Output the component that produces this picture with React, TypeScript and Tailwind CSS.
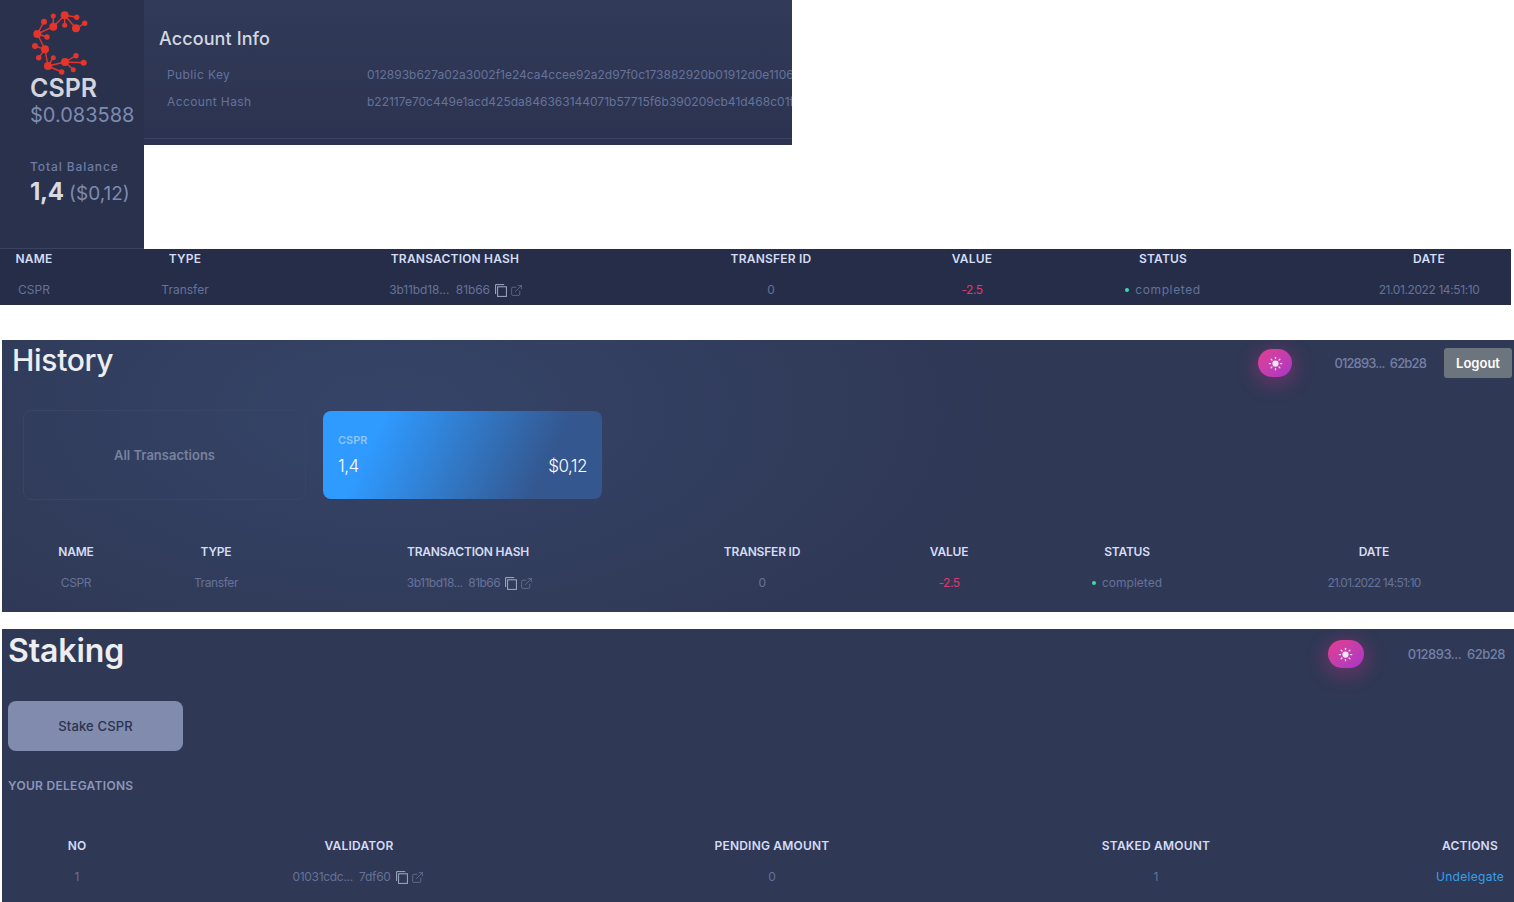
import React from 'react';
import { ExternalLink, Sun } from 'lucide-react';

const nodes = [
  [64.7, 14.3, 4], [53.3, 25.7, 4], [44, 20.7, 3], [53.3, 15, 2.5], [76.7, 16.3, 2.7], [84.7, 22.3, 2.7], [76, 27.3, 4],
  [64.7, 24.3, 2.5], [37.3, 33, 4], [47, 36, 2.7], [35, 45, 3], [45, 48.3, 4], [38.7, 56.7, 2.7], [53.3, 56.7, 2.5],
  [48, 65, 4], [65, 61, 4], [76, 54.7, 2.7], [83.7, 61.7, 3], [73.3, 68.7, 2.5], [61.7, 71, 2.7],
];

const links = [
  [64.7, 14.3, 53.3, 25.7], [53.3, 25.7, 53.3, 15], [53.3, 25.7, 37.3, 33], [44, 20.7, 37.3, 33], [64.7, 14.3, 76.7, 16.3],
  [64.7, 14.3, 76, 27.3], [76, 27.3, 84.7, 22.3], [64.7, 14.3, 64.7, 24.3], [37.3, 33, 47, 36], [37.3, 33, 45, 48.3],
  [35, 45, 45, 48.3], [45, 48.3, 38.7, 56.7], [45, 48.3, 48, 65], [53.3, 56.7, 48, 65], [48, 65, 65, 61], [65, 61, 76, 54.7],
  [65, 61, 83.7, 61.7], [65, 61, 73.3, 68.7], [48, 65, 61.7, 71],
];

const Logo = () => (
  <svg width="60" height="66" viewBox="30 9 60 66" className="block">
    {links.map((l, i) => (
      <line key={i} x1={l[0]} y1={l[1]} x2={l[2]} y2={l[3]} stroke="#e5352b" strokeWidth="1.4" />
    ))}
    {nodes.map((n, i) => (
      <circle key={i} cx={n[0]} cy={n[1]} r={n[2]} fill="#e5352b" />
    ))}
  </svg>
);

const CopyIcon = () => (
  <svg width="12" height="13" viewBox="0 0 12 13" fill="none" stroke="#a3abc4" strokeWidth="1" className="shrink-0">
    <path d="M.6 10V.6h8.6" />
    <rect x="2.6" y="2.8" width="8.8" height="9.6" />
  </svg>
);

const HashCell = ({ left, right, textCls, boxCls }: { left: string; right: string; textCls: string; boxCls: string }) => (
  <div className={"flex items-center justify-center gap-[5px] whitespace-pre " + boxCls}>
    <span className={textCls}>{left}&nbsp;&nbsp;{right}</span>
    <CopyIcon />
    <ExternalLink className="w-[13px] h-[13px] -ml-[2px] text-[#7f89a8]" strokeWidth={1.1} />
  </div>
);

const Completed = ({ textCls }: { textCls: string }) => (
  <div className="flex items-center justify-center gap-[6px]">
    <span className="w-1 h-1 rounded-full bg-[#3fd8b4]"></span>
    <span className={textCls}>completed</span>
  </div>
);

const ThemeToggle = ({ wide }: { wide?: boolean }) => (
  <div className={(wide ? "w-[36px]" : "w-[34px]") + " h-7 rounded-[14px] bg-gradient-to-br from-[#e43c8e] to-[#a834c8] shadow-[0_4px_18px_5px_rgba(214,52,140,0.28)] flex items-center justify-center"}>
    <Sun className="w-[15px] h-[15px] text-[#f1e6f2] fill-[#f1e6f2]" strokeWidth={2} />
  </div>
);

// tracking differs per table, the reference is squeezed in places
const headCls = "text-center text-[12px] font-semibold text-[#d5dcf5] whitespace-nowrap tracking-[0.2px]";
const headTightCls = "text-center text-[12px] font-semibold text-[#d5dcf5] whitespace-nowrap tracking-[-0.2px]";
const cellBase = "text-center text-[12px] whitespace-nowrap";
const cellCls = cellBase + " text-[#66729a]";
const tightCls = cellBase + " text-[#66729a] tracking-[-0.4px]";

const App: React.FC = () => {
  return (
    <div className="bg-white h-[902px] w-[1514px] overflow-hidden font-['Inter',sans-serif]">
      {/* Account block */}
      <div className="flex items-start h-[249px]">
        <aside className="w-[144px] h-[249px] bg-[#29314d] border-b border-[#3a4361] pl-[30px] pt-[10px] flex flex-col">
          <Logo />
          <div className="text-[25px] leading-[26px] font-semibold text-[#d2d5de] -mt-[1px]">CSPR</div>
          <div className="text-[20px] leading-[26px] text-[#7e8bb0] whitespace-nowrap mt-[1px]">$0.083588</div>
          <div className="text-[12px] leading-4 font-medium text-[#6f7ca6] mt-[31px] tracking-[0.9px] whitespace-nowrap">Total Balance</div>
          <div className="mt-[3px] leading-7 whitespace-nowrap text-[#7e8bb0] text-[19px]">
            <span className="text-[24px] font-bold text-[#d8dae2] tracking-[-0.3px]">1,4</span> ($0,12)
          </div>
        </aside>
        <section className="w-[648px] h-[145px] overflow-hidden bg-gradient-to-b from-[#313a58] to-[#2b3350] pt-[27px]">
          <h2 className="text-[18px] leading-6 font-medium text-[#d4d7e0] pl-[15px] tracking-[0.1px]">Account Info</h2>
          <dl className="pl-[23px] mt-[10px] text-[12px] text-[#66729a] border-b border-[#3a4361] h-[78px]">
            <div className="flex h-[27px] items-center whitespace-nowrap">
              <dt className="w-[200px] shrink-0 tracking-[0.4px]">Public Key</dt>
              <dd>012893b627a02a3002f1e24ca4ccee92a2d97f0c173882920b01912d0e1106a8c21</dd>
            </div>
            <div className="flex h-[27px] items-center whitespace-nowrap">
              <dt className="w-[200px] shrink-0 tracking-[0.4px]">Account Hash</dt>
              <dd>b22117e70c449e1acd425da846363144071b57715f6b390209cb41d468c01f7a6e2</dd>
            </div>
          </dl>
        </section>
      </div>

      {/* Top transactions table */}
      <div className="w-[1511px] h-[56px] bg-[#252d48]">
        <div className="grid grid-cols-[68px_234px_306px_326px_76px_306px_195px] h-[20px] items-center">
          <div className={headCls}>NAME</div>
          <div className={headCls}>TYPE</div>
          <div className={headCls}>TRANSACTION HASH</div>
          <div className={headCls}>TRANSFER ID</div>
          <div className={headCls}>VALUE</div>
          <div className={headCls}>STATUS</div>
          <div className={headCls + " pl-[31px]"}>DATE</div>
        </div>
        <div className="grid grid-cols-[68px_234px_306px_326px_76px_306px_195px] h-[36px] pt-[6px] items-center">
          <div className={cellCls}>CSPR</div>
          <div className={cellCls}>Transfer</div>
          <div className={cellCls}><HashCell left="3b11bd18..." right="81b66" textCls="tracking-[-0.1px]" boxCls="pl-[2px]" /></div>
          <div className={cellCls}>0</div>
          <div className={cellBase + " text-[#e0386f] tracking-[-0.5px]"}>-2.5</div>
          <div className={cellCls}><Completed textCls="tracking-[0.6px]" /></div>
          <div className={cellCls + " pl-[31px] tracking-[-0.4px]"}>21.01.2022 14:51:10</div>
        </div>
      </div>

      {/* History */}
      <section className="ml-[2px] mt-[35px] w-[1512px] h-[272px] overflow-hidden bg-[radial-gradient(ellipse_620px_300px_at_390px_70px,#354468,#2f3855)]">
        <header className="flex items-start justify-between h-[71px]">
          <h1 className="text-[30px] leading-10 font-medium text-[#eceef2] pl-[10px] tracking-[-0.3px]">History</h1>
          <div className="flex items-center pt-[8px] pr-[2px]">
            <ThemeToggle />
            <span className="text-[13px] font-medium text-[#7480a6] ml-[42px] mt-[1px] whitespace-pre tracking-[-0.85px]">012893...&nbsp;&nbsp;62b28</span>
            <button className="ml-[18px] w-[68px] h-[30px] rounded-[3px] bg-[#6c757d] text-white text-[13px] font-semibold pt-[1px]">Logout</button>
          </div>
        </header>
        <div className="flex gap-[17px] pl-[21px]">
          <div className="w-[283px] h-[90px] -mt-[1px] pt-[1px] rounded-[8px] border border-[#3a4563] flex items-center justify-center text-[13px] font-semibold text-[#77829f]">
            All Transactions
          </div>
          <div className="w-[279px] h-[88px] rounded-[8px] bg-[linear-gradient(115deg,#2f9aff_20%,#34578f_78%)] px-[15px] pt-[22px] text-white">
            <div className="text-[11px] leading-[14px] font-semibold text-[#8fc4f5]">CSPR</div>
            <div className="flex justify-between mt-[7px] text-[17px] leading-6 font-light tracking-[-0.5px]">
              <span>1,4</span>
              <span>$0,12</span>
            </div>
          </div>
        </div>
        <div className="grid grid-cols-[148px_132px_372px_216px_158px_198px_288px] mt-[42px] h-[20px] items-center">
          <div className={headTightCls}>NAME</div>
          <div className={headTightCls}>TYPE</div>
          <div className={headTightCls}>TRANSACTION HASH</div>
          <div className={headTightCls}>TRANSFER ID</div>
          <div className={headTightCls}>VALUE</div>
          <div className={headTightCls}>STATUS</div>
          <div className={headTightCls + " pl-[8px]"}>DATE</div>
        </div>
        <div className="grid grid-cols-[148px_132px_372px_216px_158px_198px_288px] mt-[11px] h-[20px] items-center">
          <div className={tightCls}>CSPR</div>
          <div className={tightCls}>Transfer</div>
          <div className={cellCls}><HashCell left="3b11bd18..." right="81b66" textCls="tracking-[-0.5px]" boxCls="pl-[4px]" /></div>
          <div className={tightCls}>0</div>
          <div className={cellBase + " text-[#e0386f] tracking-[-0.5px]"}>-2.5</div>
          <div className={cellCls}><Completed textCls="" /></div>
          <div className={cellCls + " pl-[8px] tracking-[-0.8px]"}>21.01.2022 14:51:10</div>
        </div>
      </section>

      {/* Staking */}
      <section className="ml-[2px] mt-[17px] w-[1512px] h-[273px] overflow-hidden bg-[#2f3855] pl-[6px]">
        <header className="flex items-start justify-between h-[72px]">
          <h1 className="text-[32px] leading-[44px] font-semibold text-[#eceef2] tracking-[-0.1px]">Staking</h1>
          <div className="flex items-center pt-[11px] pr-[9px]">
            <ThemeToggle wide />
            <span className="text-[13px] font-medium text-[#7480a6] ml-[44px] mt-[1px] whitespace-pre tracking-[-0.5px]">012893...&nbsp;&nbsp;62b28</span>
          </div>
        </header>
        <button className="w-[175px] h-[50px] rounded-[8px] bg-[#808bae] text-[13px] font-medium text-[#2b3350] tracking-[0.15px] pt-[1px]">Stake CSPR</button>
        <div className="text-[12px] leading-4 font-semibold text-[#8b97bb] mt-[27px] tracking-[0.3px]">YOUR DELEGATIONS</div>
        <div className="grid grid-cols-[150px_414px_412px_356px_180px] -ml-[6px] mt-[42px] h-[20px] items-center">
          <div className={headCls}>NO</div>
          <div className={headCls}>VALIDATOR</div>
          <div className={headCls}>PENDING AMOUNT</div>
          <div className={headCls}>STAKED AMOUNT</div>
          <div className={headCls + " pl-[92px]"}>ACTIONS</div>
        </div>
        <div className="grid grid-cols-[150px_414px_412px_356px_180px] -ml-[6px] mt-[11px] h-[20px] items-center">
          <div className={cellCls}>1</div>
          <div className={cellCls}><HashCell left="01031cdc..." right="7df60" textCls="tracking-[-0.3px]" boxCls="pr-[2px]" /></div>
          <div className={cellCls}>0</div>
          <div className={cellCls}>1</div>
          <div className={cellBase + " pl-[92px] text-[#35a0ea] tracking-[0.3px]"}>Undelegate</div>
        </div>
      </section>
    </div>
  );
};

export default App;
